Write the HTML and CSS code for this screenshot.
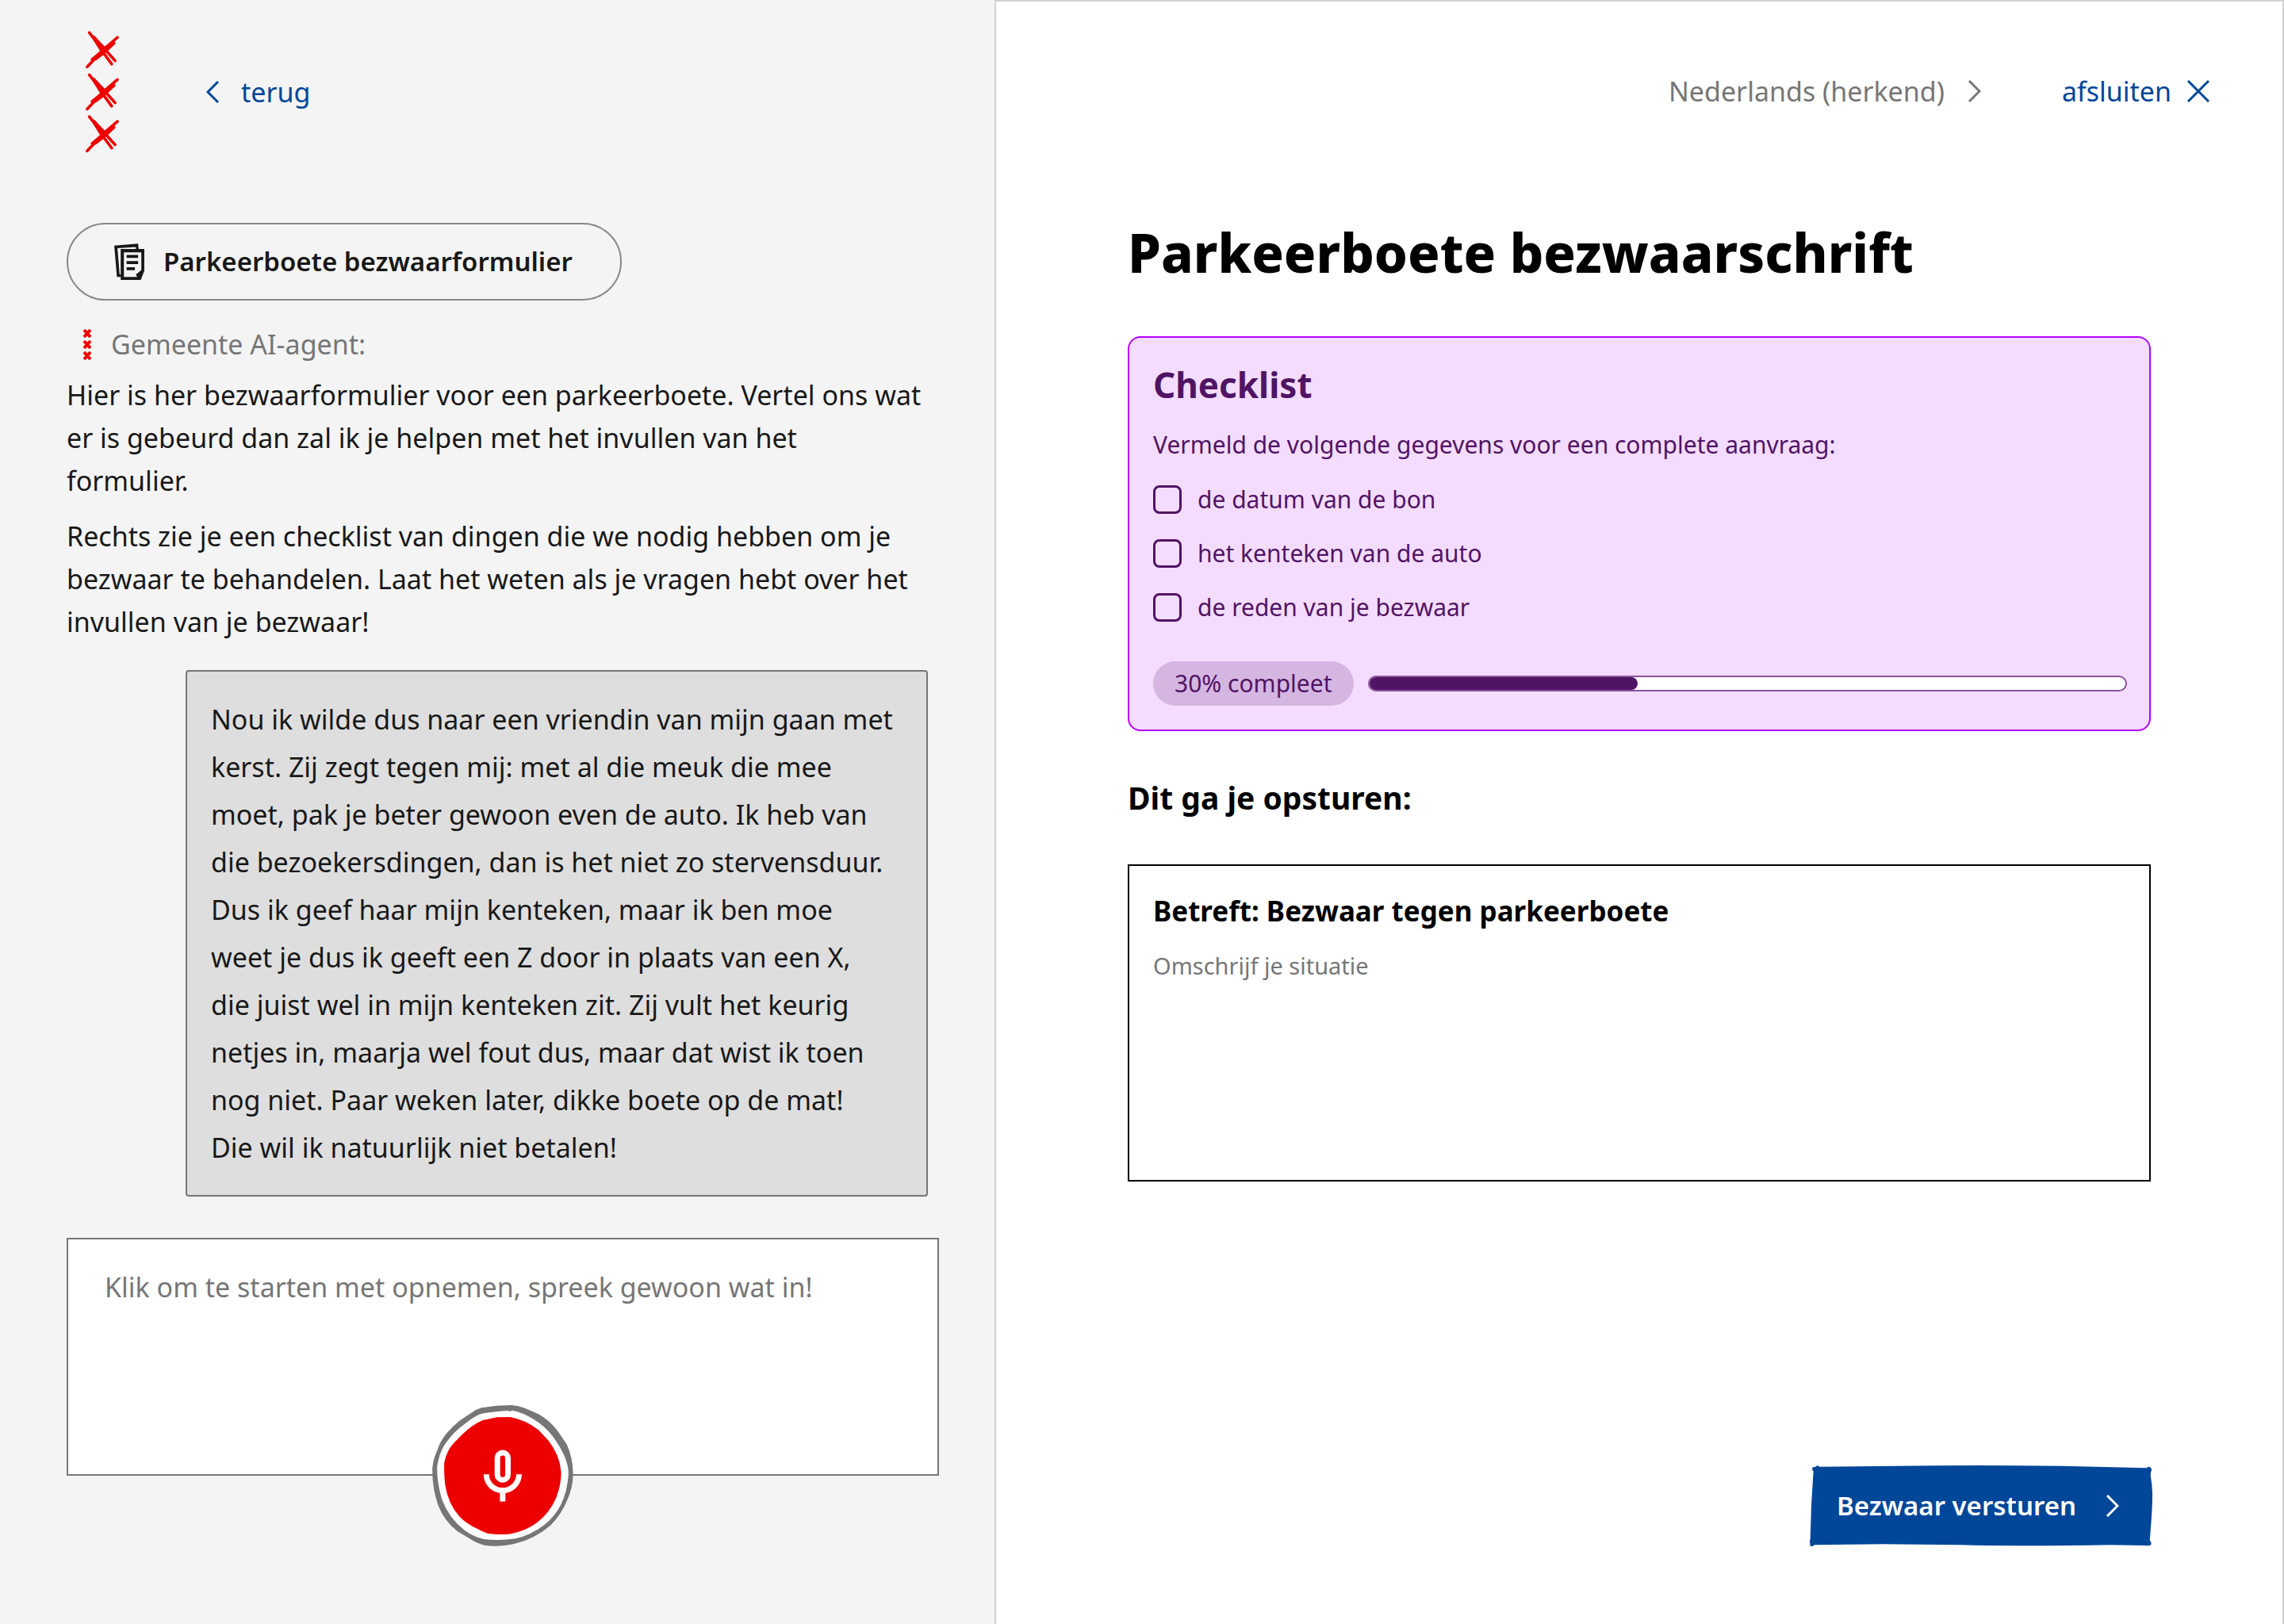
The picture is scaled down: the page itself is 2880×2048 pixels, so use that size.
FILE: index.html
```html
<!DOCTYPE html>
<html lang="nl">
<head>
<meta charset="utf-8">
<meta name="viewport" content="width=device-width, initial-scale=1">
<title>Parkeerboete bezwaarschrift</title>
<link rel="stylesheet" href="styles.css">
</head>
<body>
<div class="layout">
  <section class="chat" aria-label="Gesprek">
    <header class="chat-header">
      <svg class="logo" viewBox="143 113 128 466" role="img" aria-label="Gemeente Amsterdam">
        <defs>
          <g id="cross">
            <path d="M157 119.500 173 140 202 184 243 240M173 136 215 181 256 227M265 138 215 181 149 251M252 160 211 187 168 222" fill="none" stroke="#ec0000" stroke-width="11" stroke-linecap="round" stroke-linejoin="round"/>
            <path d="M166 134 177 132 216 173 252 152 256 164 230 188 214 203 182 227 165 222 198 190Z" fill="#ec0000"/>
          </g>
        </defs>
        <use href="#cross"/>
        <use href="#cross" y="162"/>
        <use href="#cross" y="323"/>
      </svg>
      <a class="nav-link back" href="#">
        <svg class="chevron" viewBox="0 0 16 28" aria-hidden="true"><path d="M15 1 2 14l13 13"/></svg>
        terug
      </a>
    </header>

    <button class="form-pill" type="button">
      <svg class="form-icon" viewBox="42 51 112 136" aria-hidden="true">
        <path d="M42 59 131 52 133 73 123 73 122 64 54 69 62 166 66 166 66 176 52 176Z" fill="#181818"/>
        <path d="M66 72H154V153L141 187H66ZM78 84V176H128L122 167 130 161 143 150V84Z" fill="#181818" fill-rule="evenodd"/>
        <path d="M88 94h43v11H88zM88 117h43v11H88zM88 140h31v11H88z" fill="#181818"/>
      </svg>
      Parkeerboete bezwaarformulier
    </button>

    <div class="agent">
      <svg class="agent-mark" viewBox="0 0 12 40" aria-hidden="true">
        <path d="M2 2l8 9M10 2l-8 9M2 16l8 9M10 16l-8 9M2 30l8 9M10 30l-8 9"/>
      </svg>
      Gemeente AI-agent:
    </div>
    <div class="agent-message">
      <p>Hier is her bezwaarformulier voor een parkeerboete. Vertel ons wat er is gebeurd dan zal ik je helpen met het invullen van het formulier.</p>
      <p>Rechts zie je een checklist van dingen die we nodig hebben om je bezwaar te behandelen. Laat het weten als je vragen hebt over het invullen van je bezwaar!</p>
    </div>

    <p class="user-message">Nou ik wilde dus naar een vriendin van mijn gaan met kerst. Zij zegt tegen mij: met al die meuk die mee moet, pak je beter gewoon even de auto. Ik heb van die bezoekersdingen, dan is het niet zo stervensduur. Dus ik geef haar mijn kenteken, maar ik ben moe weet je dus ik geeft een Z door in plaats van een X, die juist wel in mijn kenteken zit. Zij vult het keurig netjes in, maarja wel fout dus, maar dat wist ik toen nog niet. Paar weken later, dikke boete op de mat! Die&nbsp;wil ik natuurlijk niet betalen!</p>

    <div class="composer">
      <textarea class="composer-input" aria-label="Bericht" placeholder="Klik om te starten met opnemen, spreek gewoon wat in!"></textarea>
      <button class="record" type="button" aria-label="Opnemen">
        <svg viewBox="75 90 535 536" aria-hidden="true">
          <path d="M262 100 318 92 375 90Q402 92 428 102L478 124Q516 145 548 184L586 240Q608 290 609 345Q611 398 588 448Q565 505 524 546Q465 598 385 617Q330 630 272 622Q246 616 215 596L170 569Q120 530 97 470Q74 405 75 330Q78 296 93 263Q105 225 130 196Q150 172 180 148L240 108Z" fill="#767676"/>
          <path d="M268 121 330 113 364 111 368 114 380 110Q420 118 458 143Q500 168 532 208Q592 290 592 350Q588 420 562 470Q537 516 500 545Q450 584 390 597Q330 606 270 599Q232 590 198 566Q140 522 112 450Q92 385 93 325Q100 275 122 240Q155 190 205 156Q240 128 268 121Z" fill="#fff"/>
          <path d="M278 145 320 136 370 135Q428 145 478 184L516 225Q560 282 564 345Q565 390 545 442Q520 500 470 538Q430 568 370 579Q325 583 285 577Q265 571 245 559Q205 541 178 513Q135 465 124 395Q119 360 120 310Q128 265 155 235L190 200Q230 162 270 146Z" fill="#ec0000"/>
          <rect x="322" y="271" width="40" height="103" rx="20" fill="none" stroke="#fff" stroke-width="21"/>
          <path d="M280 353a62 61 0 0 0 124 0M342 414v42" fill="none" stroke="#fff" stroke-width="21"/>
        </svg>
      </button>
    </div>
  </section>

  <main class="letter">
    <header class="letter-header">
      <a class="nav-link language" href="#">
        Nederlands (herkend)
        <svg class="chevron" viewBox="0 0 16 28" aria-hidden="true"><path d="M1 1l13 13L1 27"/></svg>
      </a>
      <a class="nav-link close" href="#">
        afsluiten
        <svg class="close-icon" viewBox="0 0 28 28" aria-hidden="true"><path d="M1 1l26 26M27 1 1 27"/></svg>
      </a>
    </header>

    <div class="letter-body">
      <h1>Parkeerboete bezwaarschrift</h1>

      <section class="checklist">
        <h2>Checklist</h2>
        <p>Vermeld de volgende gegevens voor een complete aanvraag:</p>
        <ul>
          <li><label><input type="checkbox">de datum van de bon</label></li>
          <li><label><input type="checkbox">het kenteken van de auto</label></li>
          <li><label><input type="checkbox">de reden van je bezwaar</label></li>
        </ul>
        <div class="status">
          <span class="status-label">30% compleet</span>
          <div class="track" role="progressbar" aria-label="Voortgang" aria-valuenow="30" aria-valuemin="0" aria-valuemax="100">
            <div class="fill" style="width:35.5%"></div>
          </div>
        </div>
      </section>

      <h2 class="preview-title">Dit ga je opsturen:</h2>
      <section class="preview">
        <h3>Betreft: Bezwaar tegen parkeerboete</h3>
        <textarea aria-label="Omschrijving" placeholder="Omschrijf je situatie"></textarea>
      </section>

      <button class="submit" type="submit">
        <svg class="submit-shape" viewBox="65 81 1298 304" preserveAspectRatio="none" aria-hidden="true">
          <path d="M74 92Q76 86 88 86Q94 78 101 86L390 83Q700 79 1020 83L1180 87 1341 91Q1348 82 1357 90Q1363 98 1357 106L1356 118Q1364 160 1363 205Q1362 260 1353 363Q1362 371 1357 380Q1350 384 1338 382L1200 380Q860 386 640 380L340 377 82 380Q78 387 69 385Q64 381 67 375Q62 367 67 360L71 230 79 103Q74 99 74 92Z" fill="#004699"/>
        </svg>
        <span>Bezwaar versturen</span>
        <svg class="chevron" viewBox="0 0 16 28" aria-hidden="true"><path d="M1 1l13 13L1 27"/></svg>
      </button>
    </div>
  </main>
</div>
</body>
</html>
```
FILE: styles.css
```css
*,
*::before,
*::after {
  box-sizing: border-box;
}

body {
  margin: 0;
  font-family: "Noto Sans", "Open Sans", sans-serif;
  font-size: 34px;
  line-height: 54px;
  color: #181818;
  background: #fff;
}

h1, h2, h3, p, ul {
  margin: 0;
  padding: 0;
}

button, textarea {
  font: inherit;
  color: inherit;
  margin: 0;
}

button {
  cursor: pointer;
}

textarea {
  display: block;
  width: 100%;
  resize: none;
  border: 0;
  outline: 0;
}

textarea::placeholder {
  color: #767676;
  opacity: 1;
}

svg {
  display: block;
  flex: none;
}

.layout {
  display: grid;
  grid-template-columns: 1254fr 1626fr;
  min-height: 100vh;
}

/* Shared navigation links */
.nav-link {
  display: flex;
  align-items: center;
  color: #004699;
  text-decoration: none;
}

.chevron {
  width: 16px;
  height: 28px;
}

.chevron path,
.close-icon path {
  fill: none;
  stroke: currentColor;
  stroke-width: 3;
}

/* Chat column */
.chat {
  display: flex;
  flex-direction: column;
  padding: 38px 70px 0 84px;
  background: #f4f4f4;
}

.chat-header {
  display: flex;
  align-items: center;
  gap: 110px;
  padding-left: 24px;
}

.logo {
  width: 42px;
  height: 155px;
}

.back {
  gap: 28px;
}

.form-pill {
  display: flex;
  align-items: center;
  align-self: flex-start;
  gap: 24px;
  margin-top: 88px;
  padding: 20px 60px 20px 58px;
  border: 2px solid #888;
  border-radius: 49px;
  background: none;
  font-size: 33px;
  font-weight: 600;
}

.form-icon {
  width: 38px;
  height: 46px;
}

.agent {
  display: flex;
  align-items: center;
  gap: 24px;
  margin-top: 28px;
  padding-left: 20px;
  color: #767676;
}

.agent-mark {
  width: 12px;
  height: 40px;
}

.agent-mark path {
  fill: none;
  stroke: #ec0000;
  stroke-width: 4;
}

.agent-message {
  display: grid;
  gap: 16px;
  margin-top: 10px;
  padding-right: 20px;
}

.user-message {
  margin: 34px 14px 0 150px;
  padding: 30px 38px 30px 30px;
  border: 2px solid #767676;
  border-radius: 4px;
  background: #dedede;
  line-height: 60px;
}

.composer {
  position: relative;
  margin-top: 52px;
}

.composer-input {
  height: 300px;
  padding: 33px 46px;
  border: 2px solid #767676;
  background: #fff;
}

.record {
  position: absolute;
  left: 50%;
  bottom: 0;
  transform: translate(-50%, 50%);
  width: 178px;
  height: 178px;
  padding: 0;
  border: 0;
  border-radius: 50%;
  background: none;
}

.record svg {
  width: 100%;
  height: 100%;
}

/* Letter column */
.letter {
  display: flex;
  flex-direction: column;
  border: 2px solid #d1d1d1;
  border-bottom: 0;
}

.letter-header {
  display: flex;
  align-items: center;
  justify-content: flex-end;
  gap: 102px;
  height: 155px;
  margin-top: 35px;
  padding-right: 92px;
}

.language {
  gap: 30px;
  color: #767676;
}

.close {
  gap: 20px;
}

.close-icon {
  width: 28px;
  height: 28px;
}

.letter-body {
  display: flex;
  flex: 1;
  flex-direction: column;
  padding: 86px 166px 98px;
}

h1 {
  font-size: 67px;
  font-weight: 800;
  line-height: 80px;
  color: #000;
}

.checklist {
  margin-top: 66px;
  padding: 30px 28px 30px 30px;
  border: 2px solid #b700ff;
  border-radius: 16px;
  background: #f4dcff;
  font-size: 30px;
  line-height: 40px;
  color: #501464;
}

.checklist h2 {
  margin-bottom: 27px;
  font-size: 44px;
  line-height: 58px;
}

.checklist ul {
  display: grid;
  gap: 28px;
  margin: 29px 0 48px;
  list-style: none;
}

.checklist label {
  display: flex;
  align-items: center;
  gap: 20px;
}

.checklist input {
  appearance: none;
  width: 36px;
  height: 36px;
  margin: 0;
  border: 3px solid #501464;
  border-radius: 8px;
}

.status {
  display: flex;
  align-items: center;
  gap: 18px;
}

.status-label {
  padding: 0 27px;
  border-radius: 28px;
  background: #d5b6e1;
  line-height: 56px;
}

.track {
  flex: 1;
  height: 20px;
  border: 2px solid #87539a;
  border-radius: 10px;
  background: #fff;
}

.fill {
  height: 100%;
  border-radius: 8px;
  background: #501464;
}

.preview-title {
  margin: 58px 0;
  font-size: 39px;
  line-height: 52px;
  color: #000;
}

.preview {
  padding: 34px 30px 30px;
  border: 2px solid #000;
}

.preview h3 {
  margin-bottom: 26px;
  font-size: 35px;
  line-height: 46px;
  color: #000;
}

.preview textarea {
  height: 260px;
  padding: 0;
  background: none;
  font-size: 29px;
  line-height: 40px;
}

.submit {
  position: relative;
  display: flex;
  align-items: center;
  align-self: flex-end;
  gap: 38px;
  margin: auto -2px 0 0;
  padding: 24px 42px 24px 34px;
  border: 0;
  background: none;
  color: #fff;
  font-size: 33px;
  font-weight: 600;
}

.submit > * {
  position: relative;
}

.submit .submit-shape {
  position: absolute;
  inset: 0;
  width: 100%;
  height: 100%;
}
```
